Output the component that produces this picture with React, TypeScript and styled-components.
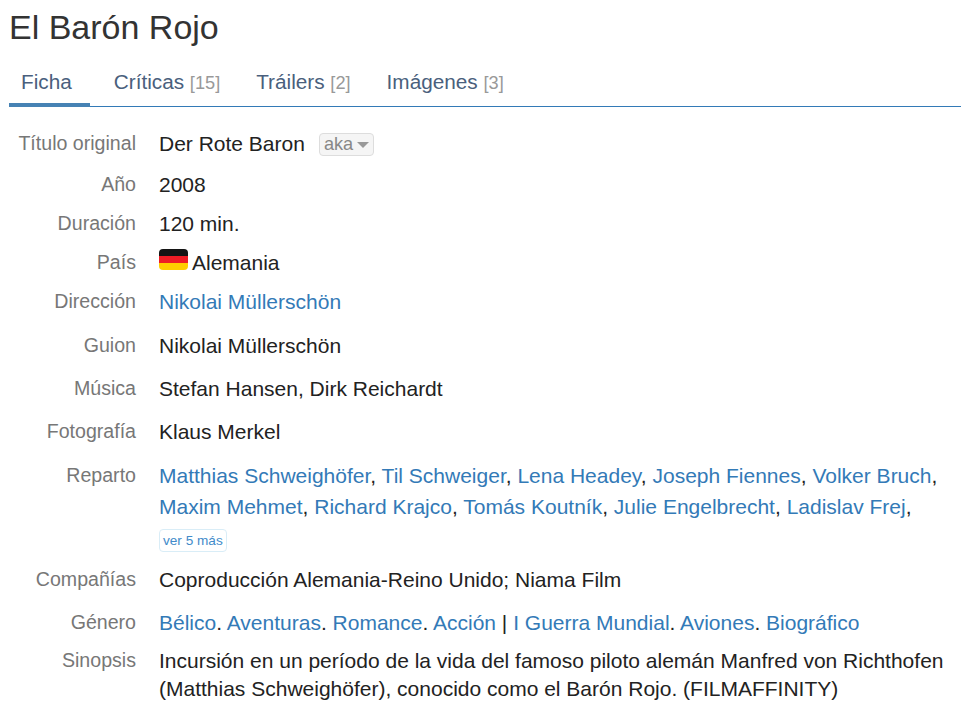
import { FC, ReactNode } from 'react'
import styled, { createGlobalStyle } from 'styled-components'

const GlobalStyle = createGlobalStyle`
  html, body {
    margin: 0;
    padding: 0;
    background: #fff;
    overflow: hidden;
  }
  body {
    font-family: "Liberation Sans", Arial, sans-serif;
    color: #222;
  }
`

const Page = styled('div')`
  width: 961px;
  height: 720px;
  overflow: hidden;
  padding: 8px 0 0 9px;
  box-sizing: border-box;
`

const Title = styled('h1')`
  margin: 0;
  font-size: 34px;
  line-height: 38px;
  font-weight: 400;
  color: #333;
`

const Tabs = styled('nav')`
  display: flex;
  margin-top: 18px;
  border-bottom: 1px solid #337ab7;
  height: 43px;
  box-sizing: border-box;
`

const Tab = styled('a')<{ $active?: boolean }>`
  display: block;
  box-sizing: border-box;
  height: 43px;
  padding: 0 18px 0 ${p => (p.$active ? '12px' : '18px')};
  margin-right: ${p => (p.$active ? '6px' : '0')};
  font-size: 20.75px;
  line-height: 35px;
  color: #4a5f7d;
  border-bottom: ${p => (p.$active ? '4px solid #4682b4' : 'none')};
`

const Count = styled('span')`
  font-size: 18.2px;
  color: #999;
`

const Rows = styled('dl')`
  margin: 24px 0 0;
  padding: 0;
`

const Row = styled('div')<{ $height: number }>`
  display: flex;
  height: ${p => p.$height}px;
`

const Label = styled('dt')`
  width: 127px;
  flex: none;
  text-align: right;
  font-size: 19.6px;
  line-height: 24px;
  color: #777;
`

const Value = styled('dd')<{ $tight?: boolean }>`
  margin: ${p => (p.$tight ? '-1px' : '-3px')} 0 0 23px;
  font-size: 21px;
  line-height: ${p => (p.$tight ? '28px' : '31px')};
  color: #222;
  white-space: nowrap;
`

const Person = styled('a')`
  color: #337ab7;
`

const Aka = styled('span')`
  display: inline-flex;
  align-items: center;
  gap: 4px;
  height: 23px;
  margin-left: 14px;
  padding: 0 4px;
  box-sizing: border-box;
  font-size: 18.2px;
  color: #888;
  background: #f5f5f5;
  border: 1px solid #ddd;
  border-radius: 4px;
  vertical-align: 1px;
`

const Caret = styled('span')`
  width: 0;
  height: 0;
  border-left: 6px solid transparent;
  border-right: 6px solid transparent;
  border-top: 6px solid #999;
`

const Flag = styled('svg')`
  width: 29px;
  height: 21px;
  margin-right: 4px;
  vertical-align: 0;
`

const More = styled('a')`
  display: inline-block;
  box-sizing: border-box;
  height: 23px;
  padding: 0 3px;
  font-size: 13.6px;
  line-height: 21px;
  color: #428bca;
  border: 1px solid #d9edf7;
  border-radius: 4px;
`

const MoreLine = styled('div')`
  line-height: 23px;
  margin-top: 4px;
`

type Item = { label: string; height: number; tight?: boolean; value: ReactNode }

const links = (names: string[]) =>
  names.map((n, i) => (
    <span key={n}>
      <Person>{n}</Person>,{i < names.length - 1 ? ' ' : ''}
    </span>
  ))

const items: Item[] = [
  {
    label: 'Título original',
    height: 41,
    value: (
      <>
        Der Rote Baron
        <Aka>
          aka
          <Caret />
        </Aka>
      </>
    ),
  },
  { label: 'Año', height: 39, value: '2008' },
  { label: 'Duración', height: 39, value: '120 min.' },
  {
    label: 'País',
    height: 39,
    value: (
      <>
        <Flag viewBox="0 0 29 21">
          <defs>
            <clipPath id="flag">
              <rect width="29" height="21" rx="4" />
            </clipPath>
          </defs>
          <g clipPath="url(#flag)">
            <rect width="29" height="7" fill="#141414" />
            <rect y="7" width="29" height="7" fill="#ee1c25" />
            <rect y="14" width="29" height="7" fill="#ffce00" />
          </g>
        </Flag>
        Alemania
      </>
    ),
  },
  { label: 'Dirección', height: 44, value: <Person>Nikolai Müllerschön</Person> },
  { label: 'Guion', height: 43, value: 'Nikolai Müllerschön' },
  { label: 'Música', height: 43, value: 'Stefan Hansen, Dirk Reichardt' },
  { label: 'Fotografía', height: 44, value: 'Klaus Merkel' },
  {
    label: 'Reparto',
    height: 104,
    value: (
      <>
        <div>
          {links(['Matthias Schweighöfer', 'Til Schweiger', 'Lena Headey', 'Joseph Fiennes', 'Volker Bruch'])}
        </div>
        <div>
          {links(['Maxim Mehmet', 'Richard Krajco', 'Tomás Koutník', 'Julie Engelbrecht', 'Ladislav Frej'])}
        </div>
        <MoreLine>
          <More>ver 5 más</More>
        </MoreLine>
      </>
    ),
  },
  { label: 'Compañías', height: 43, value: 'Coproducción Alemania-Reino Unido; Niama Film' },
  {
    label: 'Género',
    height: 38,
    value: (
      <>
        <Person>Bélico</Person>. <Person>Aventuras</Person>. <Person>Romance</Person>. <Person>Acción</Person> |{' '}
        <Person>I Guerra Mundial</Person>. <Person>Aviones</Person>. <Person>Biográfico</Person>
      </>
    ),
  },
  {
    label: 'Sinopsis',
    height: 60,
    tight: true,
    value: (
      <>
        Incursión en un período de la vida del famoso piloto alemán Manfred von Richthofen
        <br />
        (Matthias Schweighöfer), conocido como el Barón Rojo. (FILMAFFINITY)
      </>
    ),
  },
]

const App: FC = () => (
  <Page>
    <GlobalStyle />
    <Title>El Barón Rojo</Title>
    <Tabs>
      <Tab $active>Ficha</Tab>
      <Tab>
        Críticas <Count>[15]</Count>
      </Tab>
      <Tab>
        Tráilers <Count>[2]</Count>
      </Tab>
      <Tab>
        Imágenes <Count>[3]</Count>
      </Tab>
    </Tabs>
    <Rows>
      {items.map(({ label, height, tight, value }) => (
        <Row key={label} $height={height}>
          <Label>{label}</Label>
          <Value $tight={tight}>{value}</Value>
        </Row>
      ))}
    </Rows>
  </Page>
)

export default App
